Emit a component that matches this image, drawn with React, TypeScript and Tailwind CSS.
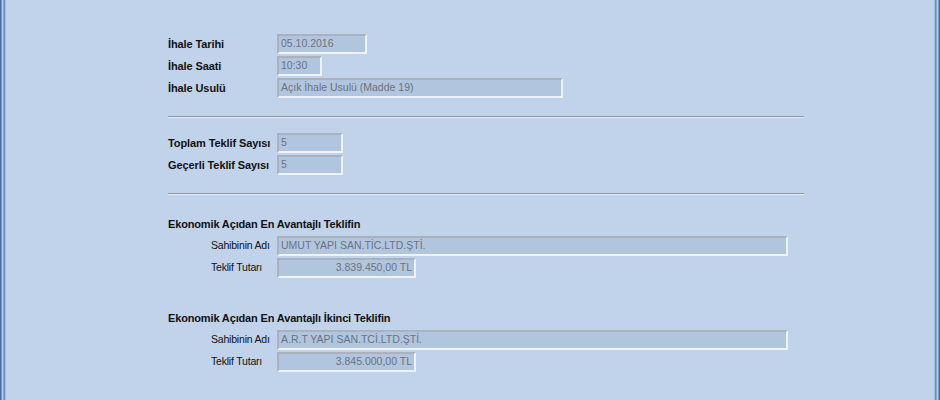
const font = { fontFamily: '"Liberation Sans", Arial, sans-serif' };

function Field({ value, w, right }: { value: string; w: string; right?: boolean }) {
  return (
    <div
      className={`${w} h-[20px] bg-[#b2c5de] border-t-2 border-l-2 border-b-2 border-r-2 border-t-[#a9b2be] border-l-[#a9b2be] border-b-[#eef3f9] border-r-[#eef3f9] flex items-center px-[2px] text-[10.5px] text-[#6a7380] ${right ? "justify-end" : ""}`}
    >
      {value}
    </div>
  );
}

function Row({ label, children, indent }: { label: string; children: React.ReactNode; indent?: boolean }) {
  return (
    <div className="flex items-center">
      {indent ? (
        <div className="w-[109px] pl-[43px] text-[10.5px] tracking-[-0.2px] text-[#111]">{label}</div>
      ) : (
        <div className="w-[109px] text-[11px] font-bold text-[#111] tracking-[-0.1px]">{label}</div>
      )}
      {children}
    </div>
  );
}

function Separator() {
  return <div className="w-[636px] border-t border-b border-t-[#8e97a5] border-b-[#e4ebf5]" />;
}

function Edge({ colors }: { colors: string[] }) {
  return (
    <div className="flex h-full">
      {colors.map((c, i) => (
        <div key={i} className="w-px h-full" style={{ background: c }} />
      ))}
    </div>
  );
}

export default function App() {
  return (
    <div className="w-[940px] h-[400px] flex bg-[#c0d3ea] overflow-hidden" style={font}>
      <Edge colors={["#4a6ca3", "#7898c8", "#b4c6e1", "#8ca8d2", "#6d8dc0", "#a8bedd", "#c0d3ea"]} />

      <div className="flex-1 pl-[161px] pt-[34px] flex flex-col">
        <div className="flex flex-col gap-[2px]">
          <Row label="İhale Tarihi"><Field value="05.10.2016" w="w-[90px]" /></Row>
          <Row label="İhale Saati"><Field value="10:30" w="w-[45px]" /></Row>
          <Row label="İhale Usulü"><Field value="Açık İhale Usulü (Madde 19)" w="w-[286px]" /></Row>
        </div>

        <div className="mt-[18px]"><Separator /></div>

        <div className="mt-[15px] flex flex-col gap-[2px]">
          <Row label="Toplam Teklif Sayısı"><Field value="5" w="w-[66px]" /></Row>
          <Row label="Geçerli Teklif Sayısı"><Field value="5" w="w-[66px]" /></Row>
        </div>

        <div className="mt-[18px]"><Separator /></div>

        <div className="mt-[22px] text-[11px] font-bold text-[#111] leading-[14px] tracking-[-0.15px]">Ekonomik Açıdan En Avantajlı Teklifin</div>
        <div className="mt-[5px] flex flex-col gap-[2px]">
          <Row label="Sahibinin Adı" indent><Field value="UMUT YAPI SAN.TİC.LTD.ŞTİ." w="w-[511px]" /></Row>
          <Row label="Teklif Tutarı" indent><Field value="3.839.450,00 TL" w="w-[139px]" right /></Row>
        </div>

        <div className="mt-[33px] text-[11px] font-bold text-[#111] leading-[14px] tracking-[-0.15px]">Ekonomik Açıdan En Avantajlı İkinci Teklifin</div>
        <div className="mt-[5px] flex flex-col gap-[2px]">
          <Row label="Sahibinin Adı" indent><Field value="A.R.T YAPI SAN.TCİ.LTD.ŞTİ." w="w-[511px]" /></Row>
          <Row label="Teklif Tutarı" indent><Field value="3.845.000,00 TL" w="w-[139px]" right /></Row>
        </div>
      </div>

      <Edge colors={["#c0d3ea", "#a8bedd", "#6d8dc0", "#8ca8d2", "#b4c6e1", "#7898c8", "#4a6ca3"]} />
    </div>
  );
}
